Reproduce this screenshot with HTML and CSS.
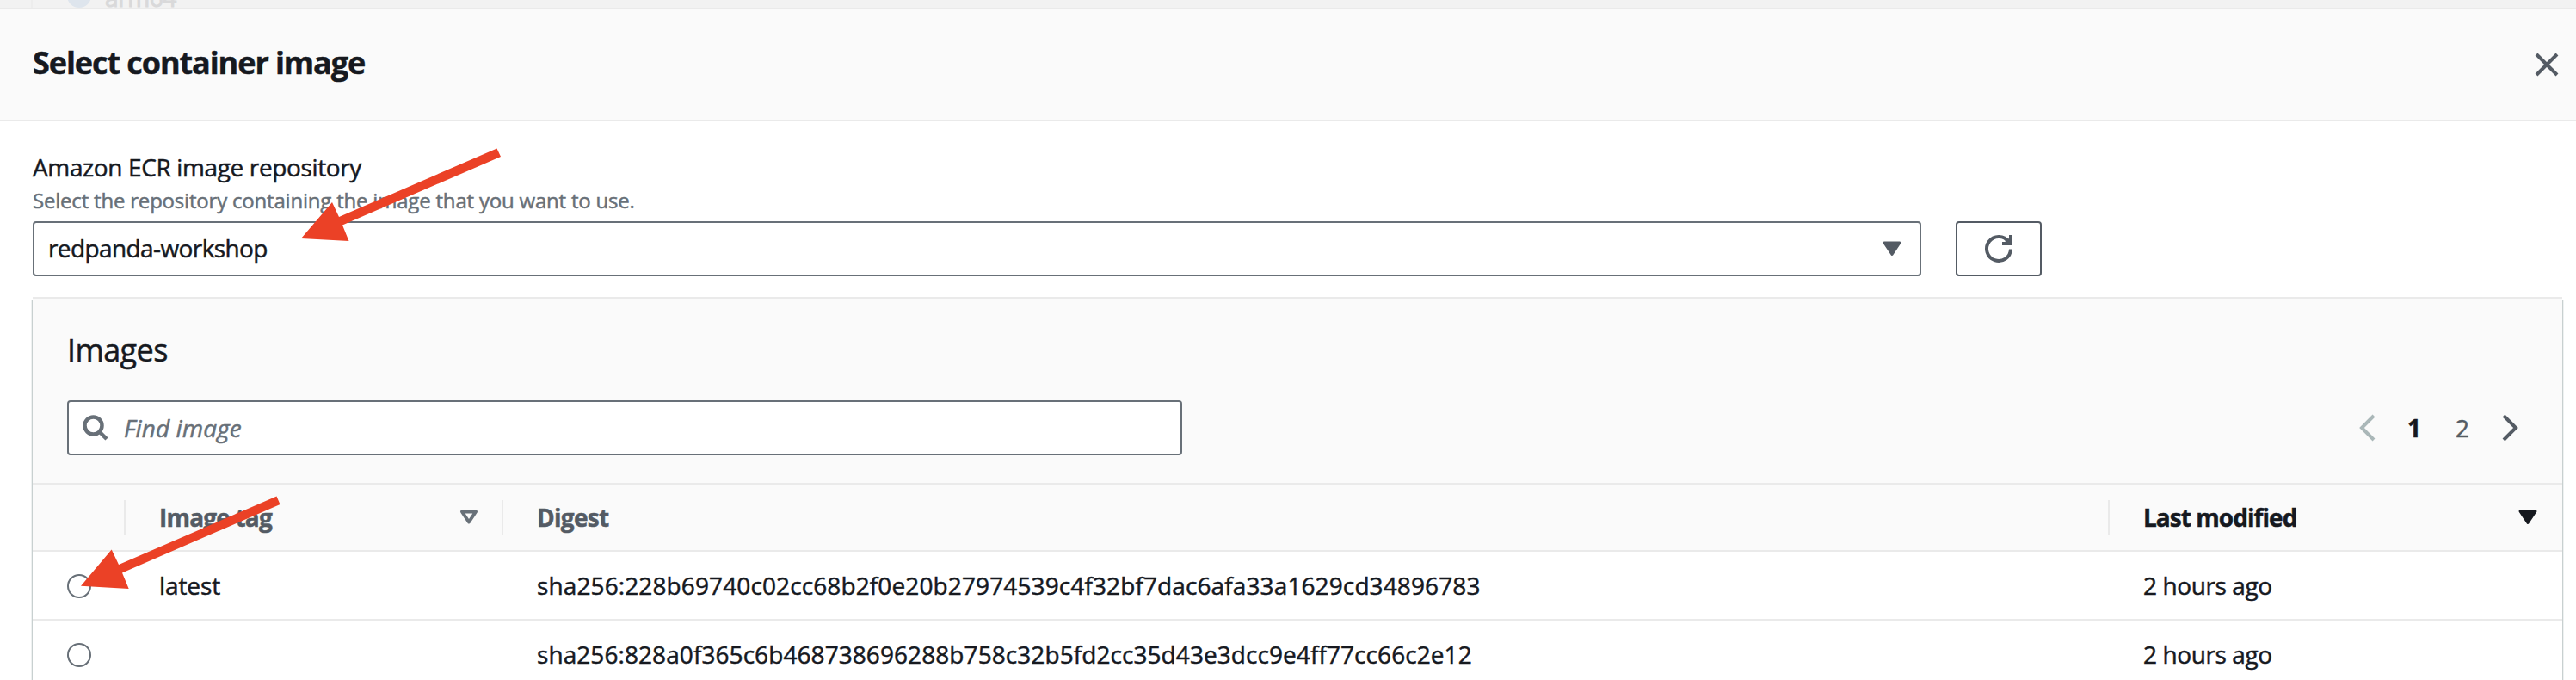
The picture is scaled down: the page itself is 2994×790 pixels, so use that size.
FILE: index.html
```
<!DOCTYPE html>
<html lang="en">
<head>
<meta charset="utf-8">
<title>Select container image</title>
<link rel="stylesheet" href="styles.css">
</head>
<body>
<div class="backdrop"><span class="backdrop-edge"></span><span class="backdrop-radio"></span><span class="backdrop-label">arm64</span></div>
<header class="modal-header">
  <h1 class="title">Select container image</h1>
  <svg class="close" width="28" height="28" viewBox="0 0 28 28"><path d="M2 2 26 26M26 2 2 26"/></svg>
</header>
<main class="content">
  <div class="label">Amazon ECR image repository</div>
  <div class="hint">Select the repository containing the image that you want to use.</div>
  <div class="select-row">
    <div class="select"><span class="select-value">redpanda-workshop</span>
      <svg width="22" height="18" viewBox="0 0 22 18"><path class="fill-dark" d="M2 2H20L11 15.500Z"/></svg>
    </div>
    <div class="refresh">
      <svg width="34" height="34" viewBox="0 0 34 34"><path class="stroke-dark" d="M31 17.500A14 14 0 1 1 28.500 9"/><path class="stroke-dark" d="M31 1V11H21"/><path class="fill-solid" d="M25 7 31 4V12H24Z"/></svg>
    </div>
  </div>
  <section class="card">
    <div class="card-head">
      <h2 class="card-title">Images</h2>
      <div class="tools">
        <div class="search">
          <svg width="30" height="30" viewBox="0 0 30 30"><circle class="stroke-grey" cx="12.500" cy="12.500" r="10"/><path class="stroke-grey" d="M19.500 19.500 28 28"/></svg>
          <span class="placeholder">Find image</span>
        </div>
        <nav class="pages">
          <svg width="20" height="32" viewBox="0 0 20 32"><path class="chevron-off" d="M18 2 4 16 18 30"/></svg>
          <span class="page page-current">1</span>
          <span class="page page-next">2</span>
          <svg width="20" height="32" viewBox="0 0 20 32"><path class="chevron" d="M2 2 16 16 2 30"/></svg>
        </nav>
      </div>
    </div>
    <div class="row row-head">
      <div class="cell divided"></div>
      <div class="cell divided"><span class="th-tag">Image tag</span>
        <svg class="sort-tag" width="22" height="18" viewBox="0 0 22 18"><path class="sort-line" d="M3 2.500H19L11 14.500Z"/></svg></div>
      <div class="cell divided"><span class="th-digest">Digest</span></div>
      <div class="cell"><span class="th-modified">Last modified</span>
        <svg class="sort-modified" width="22" height="18" viewBox="0 0 22 18"><path class="sort-fill" d="M2 2H20L11 15.500Z"/></svg></div>
    </div>
    <div class="row">
      <div class="cell pick"><span class="radio"></span></div>
      <div class="cell"><span class="tag">latest</span></div>
      <div class="cell"><span class="digest-a">sha256:228b69740c02cc68b2f0e20b27974539c4f32bf7dac6afa33a1629cd34896783</span></div>
      <div class="cell"><span class="ago">2 hours ago</span></div>
    </div>
    <div class="row">
      <div class="cell pick"><span class="radio"></span></div>
      <div class="cell"></div>
      <div class="cell"><span class="digest-b">sha256:828a0f365c6b468738696288b758c32b5fd2cc35d43e3dcc9e4ff77cc66c2e12</span></div>
      <div class="cell"><span class="ago">2 hours ago</span></div>
    </div>
  </section>
</main>
<svg class="arrows" width="700" height="790" viewBox="0 0 700 790">
  <path d="M577.500 172.500 582 182 398 261.500 405.500 280 350 277 386 235 394 252Z"/>
  <path d="M321.500 576.500 325.500 586 142 665.500 149.700 684 94 680.700 129.700 638.500 138 656Z"/>
</svg>
</body>
</html>
```
FILE: styles.css
```
* { box-sizing: border-box; }
body {
  margin: 0;
  height: 790px;
  overflow: hidden;
  position: relative;
  background: #fff;
  color: #16191f;
  font: 28px/30px "Open Sans", "Noto Sans", sans-serif;
  -webkit-text-stroke: 0.5px;
  white-space: nowrap;
}
svg { display: block; flex: none; fill: none; overflow: visible; }
h1, h2 { margin: 0; }

/* Dimmed page behind the dialog */
.backdrop {
  height: 11px;
  overflow: hidden;
  display: flex;
  align-items: flex-end;
  background: #f2f2f2;
  border-bottom: 2px solid #eaeaea;
}
.backdrop-edge { width: 2px; height: 9px; margin-left: 36px; background: #ededed; }
.backdrop-radio {
  width: 28px; height: 28px;
  margin-left: 40px;
  border: 9px solid #dee5ed;
  border-radius: 50%;
  background: #f2f2f2;
}
.backdrop-label { margin-left: 16px; line-height: 24px; color: #d9d9da; letter-spacing: -0.4px; -webkit-text-stroke: 1px; }

.modal-header {
  height: 130px;
  padding: 0 20px 0 38px;
  display: flex;
  align-items: center;
  justify-content: space-between;
  background: #fafafa;
  border-bottom: 2px solid #eaeaea;
}
.title { padding-bottom: 4px; font-size: 36px; line-height: 44px; letter-spacing: -1.08px; }
.close { stroke: #545b64; stroke-width: 4; }

.content { padding: 38px 16px 0 38px; }
.label { letter-spacing: -0.37px; }
.hint { margin-top: 9px; font-size: 24px; color: #687078; letter-spacing: -0.2px; }

.select-row { display: flex; gap: 40px; margin-top: 9px; }
.select {
  width: 2195px; height: 64px;
  padding: 0 21px 0 16px;
  display: flex;
  align-items: center;
  justify-content: space-between;
  border: 2px solid #687078;
  border-radius: 4px;
}
.select-value { padding-bottom: 2px; letter-spacing: -0.6px; }
.fill-dark { fill: #545b64; stroke: #545b64; stroke-width: 3; stroke-linejoin: round; }
.fill-solid { fill: #545b64; }
.refresh {
  width: 100px; height: 64px;
  display: flex;
  align-items: center;
  justify-content: center;
  border: 2px solid #545b64;
  border-radius: 4px;
}
.stroke-dark { stroke: #545b64; stroke-width: 4; }

.card {
  margin-top: 24px;
  border-top: 2px solid #eaeaea;
  background: #fff;
  box-shadow: -1px 3px 0 #c8d0d0, 1px 3px 0 #c8d0d0, -2px 3px 0 #eef1f1, 2px 3px 0 #eef1f1;
}
.card-head { padding: 40px 50px 32px 40px; background: #fafafa; border-bottom: 2px solid #eaeaea; }
.card-title { font-size: 36px; font-weight: 400; line-height: 40px; letter-spacing: -0.6px; }
.tools { display: flex; justify-content: space-between; align-items: center; margin-top: 38px; }
.search {
  width: 1296px; height: 64px;
  padding-left: 16px;
  display: flex;
  align-items: center;
  gap: 18px;
  border: 2px solid #687078;
  border-radius: 4px;
  background: #fff;
}
.stroke-grey { stroke: #687078; stroke-width: 4.5; }
.placeholder { padding-bottom: 1px; font-style: italic; color: #687078; letter-spacing: 0.1px; }
.pages { display: flex; align-items: center; }
.page { padding-bottom: 1px; text-align: center; }
.page-current { width: 56px; margin-left: 17px; font-weight: 700; }
.page-next { width: 56px; margin-right: 18px; color: #545b64; }
.chevron, .chevron-off { stroke: #545b64; stroke-width: 4; }
.chevron-off { stroke: #aab7b8; }

.row {
  height: 80px;
  display: grid;
  grid-template-columns: 108px 439px 1867px 1fr;
  align-items: center;
  border-bottom: 2px solid #eaeaea;
}
.row-head { height: 78px; background: #fafafa; font-weight: 700; color: #545b64; }
.cell { height: 40px; padding-left: 39px; display: flex; align-items: center; justify-content: space-between; }
.row-head span { padding-bottom: 1px; }
.divided { border-right: 2px solid #eaeaea; }
.th-tag { letter-spacing: -0.8px; }
.th-digest { letter-spacing: -0.7px; }
.th-modified { letter-spacing: -0.95px; color: #16191f; }
.sort-tag { margin-right: 27px; }
.sort-modified { margin-right: 29px; }
.sort-line { stroke: #687078; stroke-width: 4; stroke-linejoin: round; }
.sort-fill { fill: #16191f; stroke: #16191f; stroke-width: 3; stroke-linejoin: round; }
.pick { padding: 2px 0 0 40px; }
.radio { width: 28px; height: 28px; border: 2px solid #687078; border-radius: 50%; background: #fff; }
.digest-a { letter-spacing: 0.11px; }
.digest-b { letter-spacing: 0.07px; }
.tag { letter-spacing: -0.1px; }
.ago { letter-spacing: -0.4px; }

/* Annotation arrows over the dialog */
.arrows { position: absolute; left: 0; top: 0; fill: #eb4126; }
```
